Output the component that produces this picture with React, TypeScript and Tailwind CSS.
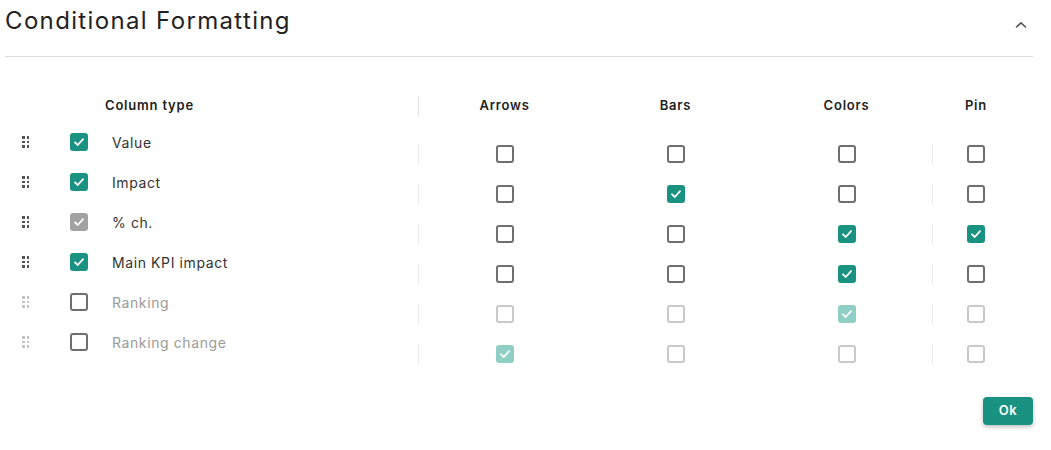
import React from 'react';

type Box = 'on' | 'off' | 'grey' | 'dis-on' | 'dis-off';

const rows: { label: string; main: Box; enabled: boolean; cells: Box[] }[] = [
  { label: 'Value', main: 'on', enabled: true, cells: ['off', 'off', 'off', 'off'] },
  { label: 'Impact', main: 'on', enabled: true, cells: ['off', 'on', 'off', 'off'] },
  { label: '% ch.', main: 'grey', enabled: true, cells: ['off', 'off', 'on', 'on'] },
  { label: 'Main KPI impact', main: 'on', enabled: true, cells: ['off', 'off', 'on', 'off'] },
  { label: 'Ranking', main: 'off', enabled: false, cells: ['dis-off', 'dis-off', 'dis-on', 'dis-off'] },
  { label: 'Ranking change', main: 'off', enabled: false, cells: ['dis-on', 'dis-off', 'dis-off', 'dis-off'] },
];

function Check({ kind }: { kind: Box }) {
  if (kind === 'off' || kind === 'dis-off') {
    return (
      <div
        className={`w-[18px] h-[18px] rounded-[3px] border-2 ${kind === 'off' ? 'border-[#6f6f6f]' : 'border-[#c9c9c9]'}`}
      />
    );
  }
  const bg = kind === 'on' ? 'bg-[#1a9282]' : kind === 'grey' ? 'bg-[#a2a2a2]' : 'bg-[#8fcfc6]';
  return (
    <div className={`w-[18px] h-[18px] rounded-[3px] flex items-center justify-center ${bg}`}>
      <svg width="12" height="12" viewBox="0 0 12 12" fill="none">
        <path d="M2 6.3 L4.8 9 L10 3.2" stroke="white" strokeWidth="1.8" strokeLinecap="round" strokeLinejoin="round" />
      </svg>
    </div>
  );
}

function Grip({ enabled }: { enabled: boolean }) {
  const c = enabled ? 'bg-[#555]' : 'bg-[#c4c4c4]';
  return (
    <div className="grid grid-cols-2 gap-x-[2px] gap-y-[2px] w-[7px]">
      {Array.from({ length: 6 }).map((_, i) => (
        <div key={i} className={`w-[2.5px] h-[2.5px] ${c}`} />
      ))}
    </div>
  );
}

export default function App() {
  return (
    <div className="w-[1051px] h-[450px] bg-white px-[5px] text-[#222]" style={{ fontFamily: 'Inter, "Open Sans", sans-serif' }}>
      {/* Title */}
      <div className="flex items-center justify-between h-[57px] border-b border-[#dcdcdc] w-[1028px] pb-[14px]">
        <h1 className="text-[24px] font-normal tracking-[1.35px] text-[#222] leading-none">Conditional Formatting</h1>
        <svg width="14" height="10" viewBox="0 0 14 10" fill="none" className="mr-[5px] mt-[8px]">
          <path d="M2.5 7 L7 2.8 L11.5 7" stroke="#555" strokeWidth="1.6" strokeLinecap="round" strokeLinejoin="round" />
        </svg>
      </div>

      <div className="flex mt-[39px]">
        {/* Left: column types */}
        <div className="w-[413px] flex flex-col">
          <div className="h-[20px] flex items-center pl-[100px] text-[13px] font-semibold tracking-[0.8px] text-[#222]">Column type</div>
          <div className="h-[6px]" />
          {rows.map((r) => (
            <div key={r.label} className="h-[40px] flex items-center">
              <div className="w-[17px]" />
              <Grip enabled={r.enabled} />
              <div className="w-[41px]" />
              <Check kind={r.main} />
              <div className={`ml-[24px] text-[14px] tracking-[0.6px] ${r.enabled ? 'text-[#333]' : 'text-[#9b9b9b]'}`}>{r.label}</div>
            </div>
          ))}
        </div>

        {/* Right: formatting options */}
        <div className="flex flex-col">
          <div className="h-[20px] flex items-center">
            <div className="w-px h-[20px] bg-[#e4e4e4]" />
            {['Arrows', 'Bars', 'Colors'].map((h) => (
              <div key={h} className="w-[171px] text-center text-[13px] font-semibold tracking-[0.8px] text-[#222]">{h}</div>
            ))}
            <div className="w-px" />
            <div className="w-[86px] text-center text-[13px] font-semibold tracking-[0.8px] text-[#222]">Pin</div>
          </div>
          <div className="h-[18px]" />
          {rows.map((r) => (
            <div key={r.label} className="h-[40px] flex items-center">
              <div className="w-px h-[20px] bg-[#ececec]" />
              {r.cells.slice(0, 3).map((c, i) => (
                <div key={i} className="w-[171px] flex justify-center">
                  <Check kind={c} />
                </div>
              ))}
              <div className="w-px h-[20px] bg-[#ececec]" />
              <div className="w-[86px] flex justify-center">
                <Check kind={r.cells[3]} />
              </div>
            </div>
          ))}
        </div>
      </div>

      <div className="flex justify-end w-[1028px] mt-[23px]">
        <button className="w-[50px] h-[28px] rounded-[4px] bg-[#1a9282] text-white text-[13px] font-semibold tracking-[0.5px] shadow-[0_2px_4px_rgba(0,0,0,0.25)]">
          Ok
        </button>
      </div>
    </div>
  );
}
